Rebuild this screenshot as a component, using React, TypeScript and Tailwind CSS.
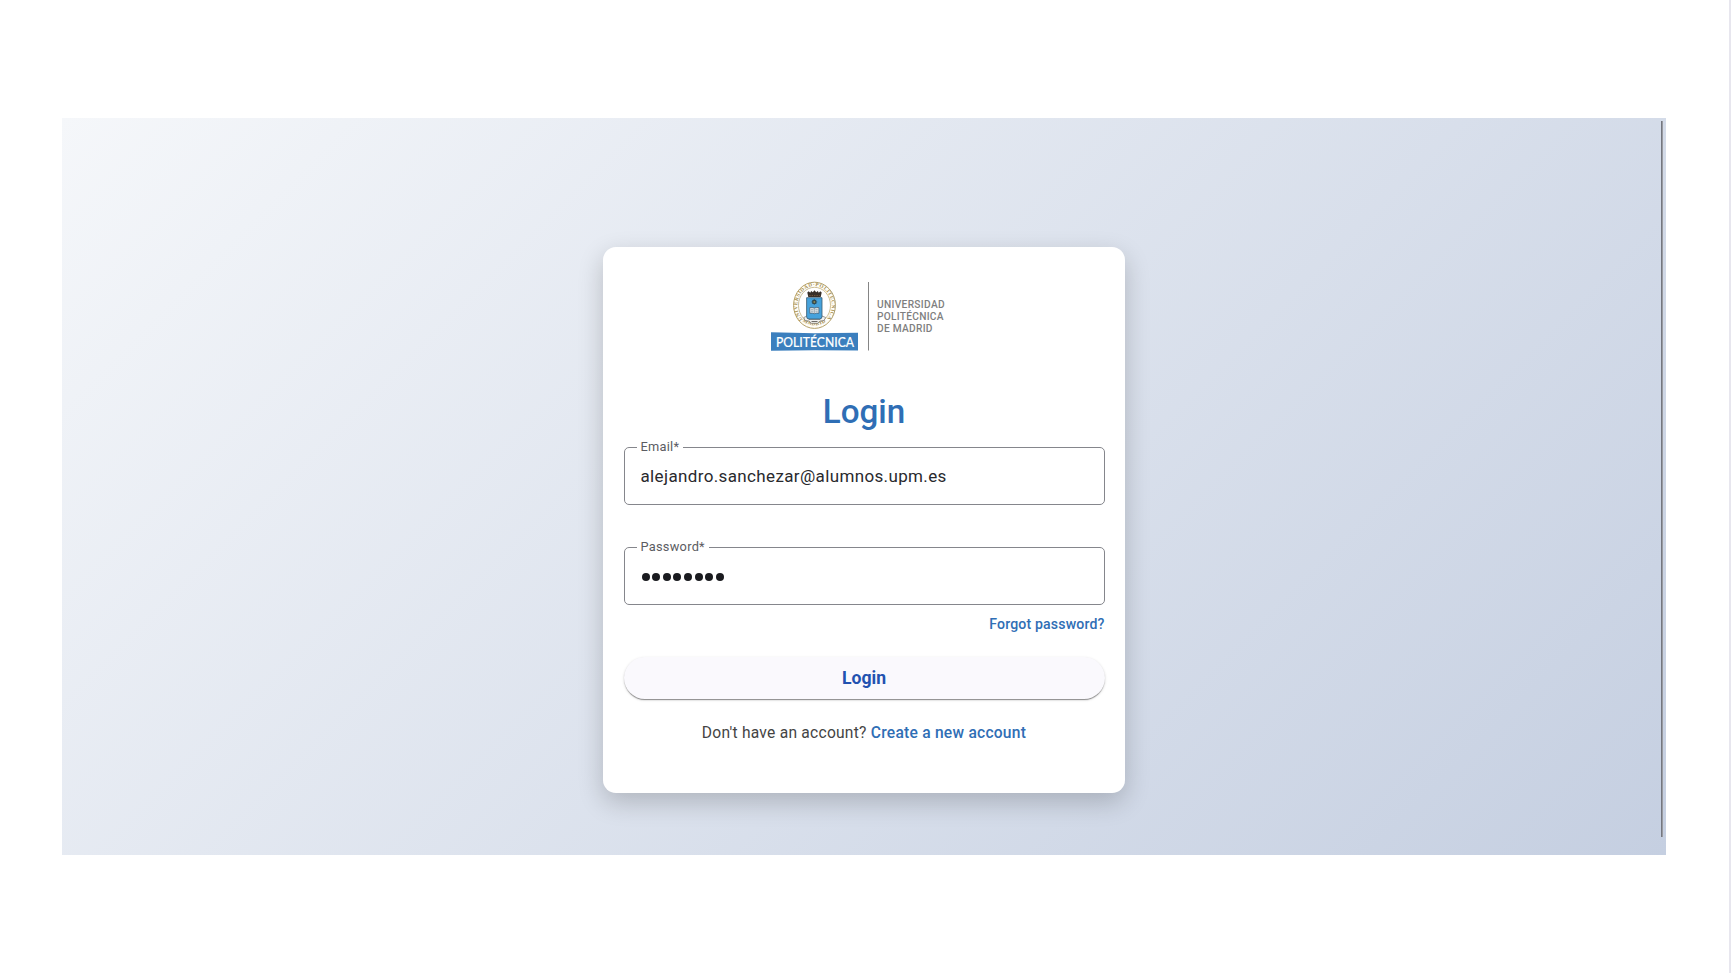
import React from "react";

function Logo() {
  return (
    <svg width="190" height="74" viewBox="765 278 190 74" className="block" role="img">
      <defs>
        <path id="ring" d="M802.5 319.300 A17.200 19.300 0 1 1 826.500 319.300 M801.500 320.500 A21 22.600 0 0 0 827.500 320.500" />
      </defs>
      <ellipse cx="814.5" cy="305.3" rx="20.900" ry="23.100" fill="#fffdf7" stroke="#b5a169" strokeWidth="1" />
      <ellipse cx="814.5" cy="305.3" rx="16" ry="18" fill="#fff" stroke="#bfad7b" strokeWidth="0.8" />
      <text fontFamily="Liberation Serif, serif" fontWeight="700" fontSize="5.2" fill="#a38c4d">
        <textPath href="#ring" textLength="113">UNIVERSIDAD·POLITECNICA·MADRID</textPath>
      </text>
      <path d="M803.800 317.500 807 316 809 319.500H820L822 316 825.700 317.500 824 320.500 820 321 817.500 323.300H811.500L809 321 805 320.500Z" fill="#f1f1ef" stroke="#77746e" strokeWidth="0.7" />
      <path d="M811.500 321.500H817.500" stroke="#605d58" strokeWidth="0.9" />
      <path d="M806.600 297.700H822V316.500Q822 319 819.500 319H809Q806.600 319 806.600 316.500Z" fill="#46a2dc" stroke="#3a5b70" strokeWidth="0.8" />
      <path d="M808.300 297 807.300 292.600 808.700 291.300 810.200 292.700 811.200 290.900 812.800 292.200 814.500 290.200 816.200 292.200 817.800 290.900 818.800 292.700 820.300 291.300 821.700 292.600 820.700 297Z" fill="#38302a" />
      <path d="M809.300 295.500H819.800" stroke="#8b6440" strokeWidth="0.7" strokeDasharray="1.300 1.100" />
      <circle cx="814.3" cy="301.900" r="2.300" fill="#304a50" />
      <path d="M814.3 298.900V304.900M811.300 301.900H817.300M812.200 299.800L816.400 304M816.400 299.800L812.200 304" stroke="#304a50" strokeWidth="0.6" />
      <circle cx="814.3" cy="301.900" r="1" fill="#8f8a55" />
      <path d="M809.800 307.600Q812.300 307 814.300 308Q816.500 307 818.900 307.600V313.300Q816.500 312.700 814.300 313.700Q812.300 312.700 809.800 313.300Z" fill="#dfe7eb" stroke="#44586a" strokeWidth="0.7" />
      <path d="M814.300 308V313.500M811 309.300H813.300M811 311.200H813.300M815.400 309.300H817.700M815.400 311.200H817.700" stroke="#6d7f8c" strokeWidth="0.6" />
      <path d="M771 332.200 814 333.300 858 332.800 858 350.500 815 350.200 771 350.800Z" fill="#3b7fbe" />
      <text x="776" y="346.700" textLength="78" lengthAdjust="spacingAndGlyphs" fontFamily="Lato, sans-serif" fontWeight="500" fontSize="13.400" fill="#fff" stroke="#fff" strokeWidth="0.15">POLITÉCNICA</text>
      <rect x="868" y="282" width="1" height="68.500" fill="#858585" />
      <g fontFamily="Roboto, sans-serif" fontWeight="500" fontSize="10.200" fill="#7f7f7f">
        <text x="877" y="308.200" textLength="67.600">UNIVERSIDAD</text>
        <text x="877" y="320.300" textLength="66.500">POLITÉCNICA</text>
        <text x="877" y="332.400" textLength="55.500">DE MADRID</text>
      </g>
    </svg>
  );
}

function Field({ label, children }: { label: string; children: React.ReactNode }) {
  return (
    <fieldset className="h-[66px] w-full rounded-[5px] border border-[#85868c] pr-4 pl-[12px]">
      <legend className="h-4 px-[4px] text-[12.8px] leading-4 tracking-[0.26px] text-[#5b5c62]">{label}</legend>
      <div className="flex h-[42px] items-center pl-[4px]">{children}</div>
    </fieldset>
  );
}

export default function App() {
  return (
    <div className="flex h-[973px] w-full justify-between bg-white font-['Roboto',sans-serif]">
      <main className="mt-[118px] ml-[62px] flex h-[737px] w-[1604px] bg-linear-135 from-[#f5f7fa] to-[#c5cfe1]">
        <section className="mt-[129px] ml-[541px] flex h-[546px] w-[522px] flex-col items-center rounded-[13px] bg-white px-[20.5px] pt-[31px] shadow-[0_9px_26px_rgba(0,0,0,0.2)]">
          <div className="-ml-[8px]">
            <Logo />
          </div>
          <h1 className="mt-[38px] h-[44px] text-[33.2px] leading-[44px] font-medium text-[#2f6eb5]">Login</h1>
          <div className="mt-[5px] w-full">
            <Field label="Email*">
              <span className="pt-px text-[17px] tracking-[0.36px] text-[#29292d]">alejandro.sanchezar@alumnos.upm.es</span>
            </Field>
          </div>
          <div className="mt-[34px] w-full">
            <Field label="Password*">
              <span className="flex gap-[2.65px] pt-[2px] pl-[1px]">
                {Array.from({ length: 8 }, (_, i) => (
                  <i key={i} className="size-[8px] rounded-full bg-[#1a1b1f]" />
                ))}
              </span>
            </Field>
          </div>
          <a className="mt-[9px] h-5 self-end text-[14.1px] leading-5 font-medium tracking-[0.15px] text-[#2f6eb5]">Forgot password?</a>
          <button className="mt-[23px] h-[42px] w-full shrink-0 rounded-full bg-[#faf9fd] pt-px text-[17.6px] font-bold text-[#2252b0] shadow-[0_2px_1px_-1px_rgba(0,0,0,0.26),0_1px_1px_rgba(0,0,0,0.18),0_1px_3px_rgba(0,0,0,0.15)]">Login</button>
          <p className="mt-[21.500px] text-[15.6px] leading-6 tracking-[0.24px] whitespace-nowrap text-[#444]">
            Don't have an account? <a className="font-medium text-[#2f6eb5]">Create a new account</a>
          </p>
        </section>
        <div className="mt-[3px] mr-[3px] ml-auto h-[716px] w-[2px] border-l border-[#747780] bg-[#999ba1]" />
      </main>
      <div className="w-[2px] bg-[#e7e6ee]" />
    </div>
  );
}
